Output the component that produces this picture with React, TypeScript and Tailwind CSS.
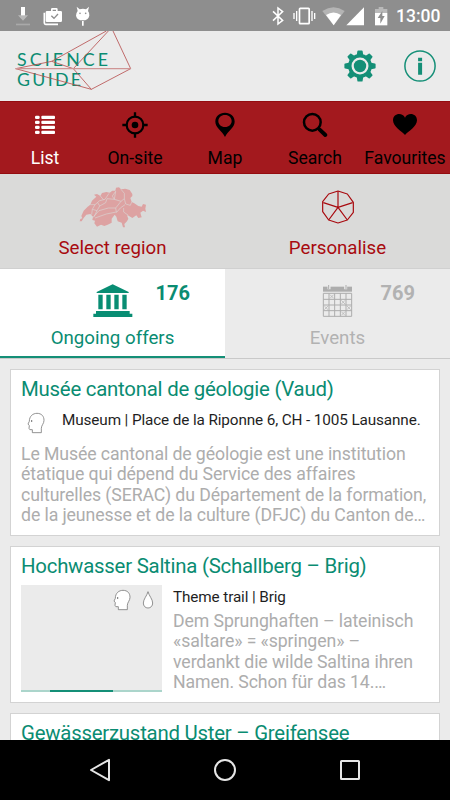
import React from "react";

interface IconProps {
  className?: string;
}

interface NavItem {
  label: string;
  icon: React.ReactNode;
  active?: boolean;
}

const StatusBar: React.FC = () => (
  <div className="flex h-[31px] shrink-0 items-center bg-[#8e8e8e] text-white">
    {/* Notifications */}
    <svg className="ml-[15px] h-5 w-4" viewBox="45 17 48 60">
      <path d="M63 20h12v25h9L69 61 54 45h9z" fill="#b9b9b9" />
      <path d="M63 20h12v25H63z" fill="#fff" />
      <path d="M48 70h42v5H48z" fill="#a9a9a9" />
    </svg>
    <svg className="ml-[12px] h-5 w-5" viewBox="129 17 60 60" fill="none">
      <path d="M133 37v31q0 4 4 4h37" stroke="#fff" strokeWidth="5" />
      <path
        d="M141 32h12v-5q0-4 4-4h12q4 0 4 4v5h9q4 0 4 4v25q0 4-4 4h-41q-4 0-4-4V36q0-4 4-4zm17 0h10v-4h-10z"
        fill="#fff"
        fillRule="evenodd"
      />
      <path d="M154 46l8 8 12-13" stroke="#8e8e8e" strokeWidth="4" />
    </svg>
    <svg className="ml-[12px] h-5 w-4" viewBox="224 17 48 60">
      <path
        d="M229 19l9 8q10-4 19 0l9-8-3 13q5 6 4 14-3 14-20 14t-20-14q0-8 5-14z"
        fill="#fff"
      />
      <path d="M245 62h5v14h-5z" fill="#fff" />
      <circle cx="239" cy="39" r="2.500" fill="#8e8e8e" />
      <circle cx="256" cy="39" r="2.500" fill="#8e8e8e" />
    </svg>
    {/* System state */}
    <div className="ml-auto flex items-center">
      <svg className="h-5 w-[14px]" viewBox="135 17 42 60" fill="none">
        <path
          d="M141 33l29 27-14 11V23l14 11-29 27"
          stroke="#fff"
          strokeWidth="4.500"
        />
      </svg>
      <svg className="ml-[7px] h-5 w-6" viewBox="198 16 72 60" fill="none">
        <rect
          x="220.500"
          y="23"
          width="29"
          height="46"
          rx="2"
          stroke="#fff"
          strokeWidth="5"
        />
        <path
          d="M212 31v30M204 37v18M258 31v30M266 37v18"
          stroke="#fff"
          strokeWidth="4"
        />
      </svg>
      <svg className="ml-[6px] h-5 w-[23px]" viewBox="290 16 69 60">
        <path d="M291 31q34-22 67 0L325 74z" fill="#b4b4b4" />
        <path d="M302 43q23-15 45 0l-22 31z" fill="#fff" />
      </svg>
      <svg className="ml-[1px] h-5 w-[19px]" viewBox="363 16 57 60">
        <path d="M417 20v54h-53z" fill="#fff" />
      </svg>
      <svg className="ml-[9px] h-5 w-[14px]" viewBox="446 16 42 60">
        <path d="M460 19h14v6h12v12h-37V25h11z" fill="#b9b9b9" />
        <path d="M449 37h37v37h-37z" fill="#fff" />
        <path d="M471 31v15h7l-13 23V52h-8z" fill="#8e8e8e" />
      </svg>
      <span className="mr-[10px] ml-[8px] w-[44px] pt-[1px] text-[17.500px] leading-5 font-medium whitespace-nowrap">
        13:00
      </span>
    </div>
  </div>
);

const GearIcon: React.FC<IconProps> = ({ className }) => (
  <svg className={className} viewBox="-16 -16 32 32" fill="#148f77">
    {[0, 45, 90, 135, 180, 225, 270, 315].map((angle) => (
      <path
        key={angle}
        transform={`rotate(${angle})`}
        d="M-3.400-10l.8-4.900q.1-.7.800-.7h3.600q.7 0 .8.700l.8 4.900z"
      />
    ))}
    <circle r="10.200" fill="none" stroke="#148f77" strokeWidth="3.400" />
    <circle r="6.200" />
  </svg>
);

const Header: React.FC = () => (
  <header className="flex h-[70px] shrink-0 items-start bg-[#ebebeb]">
    <div className="relative h-[70px] w-[140px]">
      <div className="pt-[17.500px] pl-[17px] font-[Lato] text-[17.800px] leading-[20px] text-[#0a8c72]">
        <div className="tracking-[3.100px] whitespace-nowrap">SCIENCE</div>
        <div className="tracking-[2.300px] whitespace-nowrap">GUIDE</div>
      </div>
      <svg
        className="absolute top-0 left-0 h-[62px] w-[140px]"
        viewBox="0 93 420 186"
        fill="none"
        stroke="#b54a4a"
        strokeWidth="2.400"
      >
        <path d="M319 93L155 184 47 206l227 62 118-62-53-113M325 93L220 206l54 62M155 184l65 22" />
        <path d="M47 206h345" stroke="#cf9595" strokeWidth="3.500" />
      </svg>
    </div>
    <GearIcon className="mt-[19px] ml-auto h-8 w-8" />
    <svg
      className="mt-[19px] mr-[14px] ml-[28px] h-8 w-8"
      viewBox="-16 -16 32 32"
      fill="#148f77"
    >
      <circle r="15.100" fill="none" stroke="#148f77" strokeWidth="1.500" />
      <path d="M-1.900-8.200h4v3.400h-4zM-1.900-3.200h4V8.800h-4z" />
    </svg>
  </header>
);

const ListIcon: React.FC = () => (
  <svg className="h-7 w-7" viewBox="94 33 84 84" fill="#fff">
    {[47, 62, 77, 92].map((y) => (
      <g key={y}>
        <rect x="106" y={y} width="14" height="10" rx="4" />
        <rect x="125" y={y} width="41" height="10" rx="3" />
      </g>
    ))}
  </svg>
);

const TargetIcon: React.FC = () => (
  <svg className="h-7 w-7" viewBox="-42 -42 84 84">
    <circle r="25" fill="none" stroke="#000" strokeWidth="6.500" />
    <circle r="10" />
    <path
      d="M0-38v15M0 23v15M-38 0h15M23 0h15"
      stroke="#000"
      strokeWidth="7"
    />
  </svg>
);

const PinIcon: React.FC = () => (
  <svg className="h-7 w-7" viewBox="-42 -42 84 84">
    <path
      d="M0-37c17 0 29 11 29 27C29 8 9 17 0 36-9 17-29 8-29-10c0-16 12-27 29-27zm0 7c-12 0-20 8-20 18S-12 6 0 6s20-8 20-18-8-18-20-18z"
      fillRule="evenodd"
    />
  </svg>
);

const SearchIcon: React.FC = () => (
  <svg className="h-7 w-7" viewBox="228 33 84 84" fill="none" stroke="#000">
    <circle cx="262" cy="67" r="25" strokeWidth="7.500" />
    <path d="M281 86l4 4" strokeWidth="8" />
    <path d="M284 89l17 16" strokeWidth="12" strokeLinecap="round" />
  </svg>
);

const HeartIcon: React.FC = () => (
  <svg className="h-7 w-7" viewBox="498 33 84 84">
    <path d="M540 105c-9-10-36-25-36-44 0-23 29-25 36-8 7-17 36-15 36 8 0 19-27 34-36 44z" />
  </svg>
);

const navItems: NavItem[] = [
  { label: "List", icon: <ListIcon />, active: true },
  { label: "On-site", icon: <TargetIcon /> },
  { label: "Map", icon: <PinIcon /> },
  { label: "Search", icon: <SearchIcon /> },
  { label: "Favourites", icon: <HeartIcon /> },
];

const NavBar: React.FC = () => (
  <nav className="grid h-[73px] shrink-0 grid-cols-5 border-y border-[#940c10] bg-[#a3191e]">
    {navItems.map((item) => (
      <button
        key={item.label}
        className={`flex flex-col items-center pt-[9px] ${
          item.active ? "text-white" : "text-black"
        }`}
      >
        {item.icon}
        <span className="mt-[9px] text-[17.600px] leading-5 whitespace-nowrap">
          {item.label}
        </span>
      </button>
    ))}
  </nav>
);

const SwissMap: React.FC = () => (
  <svg className="h-[46px] w-[74px]" viewBox="227 30 222 138">
    <path
      d="M238 142l2-7 6-2-3-7 7-16 12-12 8-6 5-12 13-12-7-6 9-2 10 6 5-9 13-3 10 2 8-6h9l2-9 9-1 6 6 13-2 13 4 8 12v6l-6 6 4 12 8 4 12 8 10 2 4-8 9 2-2 12 2 10-9-4-8 6 4 14-10 2-6-8-12 8-10-6-6-2 4 10-4 8-8 8 2 10h-6l-4-14-12-4-4-14-5-6-9 12v12l-12 6-10 4-10-4-12 6-8-10 2-8-8-2 2-10-8-8-12 2-8 10-6 10z"
      fill="#dda2a2"
    />
    <path
      d="M270 92l14 0 14-12 16-4 12-18M284 92l-8 14-2 16M276 106l14 4 8-14-6-10M290 110l-10 20M298 96l18-10 4-12 22 2 4-24M342 76l20 6 10-8 0-16 -10-12M280 128l16-18 28-8 22 0 2 12-30 6-34 12M346 102l16-20M374 92l-14 10-12 14M372 74l4 16 14 4 4-10M370 102l0 12 14 10M346 52l-10 14 6 10M300 66l10 12"
      fill="none"
      stroke="#dadad9"
      strokeWidth="1.800"
    />
  </svg>
);

const PersonaliseIcon: React.FC = () => (
  <svg
    className="h-[34px] w-[34px]"
    viewBox="-51 -51 102 102"
    fill="none"
    stroke="#a80a0f"
    strokeWidth="3.600"
    strokeLinejoin="round"
  >
    <path d="M0-48l28 9 18 25v30L28 39 0 48l-28-9-18-25v-30l18-23z" />
    <path d="M0-48V1l44-14M0 1l28 38M0 1l-28 38M0 1l-44-14" />
  </svg>
);

const FilterRow: React.FC = () => (
  <div className="grid h-[94px] shrink-0 grid-cols-2 bg-[#dadad9] text-[18.700px] leading-6 text-[#a80a0f]">
    <button className="flex flex-col items-center pt-[10px]">
      <SwissMap />
      <span className="mt-[6px]">Select region</span>
    </button>
    <button className="flex flex-col items-center pt-[16px]">
      <PersonaliseIcon />
      <span className="mt-[12px]">Personalise</span>
    </button>
  </div>
);

const MuseumIcon: React.FC = () => (
  <svg
    className="h-[34px] w-[40px]"
    viewBox="278 49 120 102"
    fill="#088d73"
  >
    <path d="M337 50l48 23v3h-96v-3zM294 81h13v44h-13zM318 81h13v44h-13zM342 81h13v44h-13zM366 81h13v44h-13zM287 130h101v8h8v10H279v-10h8z" />
  </svg>
);

const CalendarIcon: React.FC = () => (
  <svg className="h-[34px] w-[31px]" viewBox="294 49 93 102">
    <path d="M297 57h87v15h-87z" fill="#adadad" />
    <path d="M315 52v13M365 52v13" stroke="#ebebeb" strokeWidth="9" />
    <path d="M314 52v12M366 52v12" stroke="#adadad" strokeWidth="3" />
    <path
      d="M298 77h85v69h-85zM298 95h85M298 112h85M298 129h85M315 77v69M332 77v69M349 77v69M366 77v69"
      fill="none"
      stroke="#adadad"
      strokeWidth="3"
    />
    <path
      d="M318 81l11 11m0-11l-11 11M352 98l11 11m0-11l-11 11M301 115l11 11m0-11l-11 11M369 115l11 11m0-11l-11 11M352 132l11 11m0-11l-11 11"
      fill="none"
      stroke="#adadad"
      strokeWidth="2"
    />
  </svg>
);

const Tabs: React.FC = () => (
  <div className="grid h-[91px] shrink-0 grid-cols-2 border-t border-b border-t-[#d0d0d0] border-b-[#c9c9c9] text-[18.700px] leading-6">
    <button className="relative flex h-[89px] flex-col items-center border-b-[2px] border-[#148f77] bg-white pt-[15px] text-[#0a8c72]">
      <MuseumIcon />
      <span className="mt-[8px]">Ongoing offers</span>
      <span className="absolute top-[12px] right-[35px] text-[20px] leading-6 font-bold">
        176
      </span>
    </button>
    <button className="relative flex h-[89px] flex-col items-center bg-[#ebebeb] pt-[15px] text-[#b2b2b2]">
      <CalendarIcon />
      <span className="mt-[8px]">Events</span>
      <span className="absolute top-[12px] right-[35px] text-[20px] leading-6 font-bold">
        769
      </span>
    </button>
  </div>
);

const HeadIcon: React.FC<IconProps> = ({ className }) => (
  <svg className={className} viewBox="81 156 54 69">
    <path
      d="M97 218v-9q-10 2-10-4l1-8-4-5 4-8c0-16 11-24 23-24 14 0 21 9 21 21 0 10-8 15-8 24v13z"
      fill="#fff"
      stroke="#777"
      strokeWidth="2.400"
      strokeLinejoin="round"
    />
    <circle cx="95" cy="183" r="2" fill="#333" />
  </svg>
);

const DropIcon: React.FC<IconProps> = ({ className }) => (
  <svg className={className} viewBox="426 151 36 57">
    <path
      d="M444 156c3 12 14 23 14 34 0 9-6 15-14 15s-14-6-14-15c0-11 11-22 14-34z"
      fill="#fff"
      stroke="#777"
      strokeWidth="2.400"
    />
  </svg>
);

const Card: React.FC<{
  title: string;
  className: string;
  children?: React.ReactNode;
}> = ({ title, className, children }) => (
  <article
    className={`mx-[10px] shrink-0 border border-[#d3d3d3] bg-white px-[10px] pt-[7px] ${className}`}
  >
    <h2 className="text-[20.400px] leading-[25px] tracking-[-0.240px] whitespace-nowrap text-[#0a8c72]">
      {title}
    </h2>
    {children}
  </article>
);

const App: React.FC = () => {
  return (
    <div className="flex h-[800px] w-[450px] flex-col overflow-hidden bg-[#ebebeb] font-[Roboto,sans-serif]">
      <StatusBar />
      <Header />
      <NavBar />
      <FilterRow />
      <Tabs />

      <main className="flex min-h-0 flex-1 flex-col gap-[10px] overflow-hidden pt-[10px]">
        <Card title="Musée cantonal de géologie (Vaud)" className="h-[167px]">
          <div className="flex items-start">
            <HeadIcon className="mt-[10px] ml-[6px] h-[23px] w-[18px]" />
            <p className="mt-[8px] ml-[17px] text-[15.300px] leading-5 tracking-[-0.120px] whitespace-nowrap text-[#1f1f1f]">
              Museum | Place de la Riponne 6, CH - 1005 Lausanne.
            </p>
          </div>
          <p className="mt-[9px] text-[17.700px] leading-[20.300px] tracking-[-0.100px] whitespace-nowrap text-[#adadad]">
            Le Musée cantonal de géologie est une institution
            <br />
            étatique qui dépend du Service des affaires
            <br />
            culturelles (SERAC) du Département de la formation,
            <br />
            de la jeunesse et de la culture (DFJC) du Canton de…
          </p>
        </Card>

        <Card
          title="Hochwasser Saltina (Schallberg – Brig)"
          className="h-[157px]"
        >
          <div className="mt-[6px] flex">
            <div className="flex h-[107px] w-[141px] flex-col justify-between bg-[#ebebeb]">
              <div className="flex justify-end pt-[4px] pr-[8px]">
                <HeadIcon className="h-[23px] w-[18px]" />
                <DropIcon className="mt-[1px] ml-[11px] h-[19px] w-[12px]" />
              </div>
              <div className="h-[2.500px] bg-[#abd5cb] pl-[29px]">
                <div className="h-full w-[63px] bg-[#148f77]" />
              </div>
            </div>
            <div className="ml-[11px] whitespace-nowrap">
              <p className="pt-[1px] text-[15.300px] leading-[22px] tracking-[-0.120px] text-[#1f1f1f]">
                Theme trail | Brig
              </p>
              <p className="mt-[3px] text-[17.700px] leading-[20.300px] tracking-[-0.100px] text-[#adadad]">
                Dem Sprunghaften – lateinisch
                <br />
                «saltare» = «springen» –
                <br />
                verdankt die wilde Saltina ihren
                <br />
                Namen. Schon für das 14.…
              </p>
            </div>
          </div>
        </Card>

        <Card
          title="Gewässerzustand Uster – Greifensee"
          className="h-[157px]"
        />
      </main>

      {/* Android navigation bar */}
      <div className="flex h-[60px] shrink-0 items-center justify-center bg-black">
        <svg className="h-6 w-6" viewBox="0 0 24 24" fill="none">
          <path
            d="M3 12L21 1.800v20.400z"
            stroke="#e6e6e6"
            strokeWidth="2"
            strokeLinejoin="round"
          />
        </svg>
        <svg className="mx-[101px] h-6 w-6" viewBox="0 0 24 24" fill="none">
          <circle cx="12" cy="12" r="10" stroke="#e6e6e6" strokeWidth="2" />
        </svg>
        <svg className="h-6 w-6" viewBox="0 0 24 24" fill="none">
          <rect
            x="3"
            y="3"
            width="18"
            height="18"
            rx="0.500"
            stroke="#e6e6e6"
            strokeWidth="2"
          />
        </svg>
      </div>
    </div>
  );
};

export default App;
